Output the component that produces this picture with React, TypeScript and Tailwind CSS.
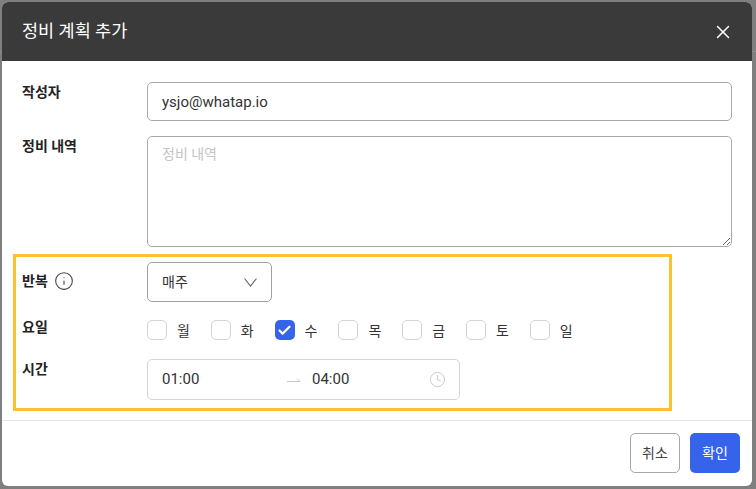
import { Check, Clock, Info, X } from "lucide-react";
import React from "react";

const FONT = "font-['Roboto','Noto_Sans_CJK_KR',sans-serif]";

const days = [
  { label: "월", checked: false },
  { label: "화", checked: false },
  { label: "수", checked: true },
  { label: "목", checked: false },
  { label: "금", checked: false },
  { label: "토", checked: false },
  { label: "일", checked: false },
];

const Label = ({ children }: { children: React.ReactNode }) => (
  <span className="block text-[14px] leading-[20px] font-bold text-[#222]">{children}</span>
);

const App = () => {
  return (
    <div className={`${FONT} relative w-[756px] h-[489px] overflow-hidden bg-[#7f7f7f] pt-[2px] pl-[2px]`}>
      {/* page behind the backdrop */}
      <div className="absolute left-0 right-0 top-[51px] h-px bg-[#8c8c8c]" />

      <div className="relative w-[750px] h-[484px] bg-white rounded-[6px] overflow-hidden flex flex-col">
        {/* Header */}
        <div className="h-[59px] shrink-0 bg-[#3a3a3a] flex items-center justify-between pl-[20px] pr-[18px]">
          <span className="text-[17.5px] text-white">정비 계획 추가</span>
          <X size={22} strokeWidth={1.6} className="text-white" />
        </div>

        {/* Form */}
        <div className="h-[360px] shrink-0 pl-[20px] pr-[20px] pt-[21px] border-b border-[#e4e4e4]">
          <div className="flex">
            <div className="w-[125px]">
              <Label>작성자</Label>
            </div>
            <input
              readOnly
              value="ysjo@whatap.io"
              className="w-[585px] h-[39px] px-[14px] text-[15px] text-[#333] border border-[#a8a8a8] rounded-[5px] outline-none"
            />
          </div>

          <div className="flex mt-[15px]">
            <div className="w-[125px]">
              <Label>정비 내역</Label>
            </div>
            <textarea
              placeholder="정비 내역"
              className="block w-[585px] h-[111px] px-[14px] py-[7px] text-[14px] leading-[20px] border border-[#a8a8a8] rounded-[5px] outline-none placeholder:text-[#c4c4c4]"
            />
          </div>

          <div className="flex mt-[15px]">
            <div className="w-[125px] flex items-center gap-[7px] h-[38px]">
              <Label>반복</Label>
              <Info size={20} strokeWidth={1.3} className="text-[#444] -ml-[1px]" />
            </div>
            <div className="w-[125px] h-[40px] pl-[14px] pr-[14px] flex items-center justify-between border border-[#a0a0a0] rounded-[5px] text-[14px] text-[#333]">
              <span>매주</span>
              <svg width="13" height="9" viewBox="0 0 13 9" fill="none" stroke="#666" strokeWidth="1.2">
                <path d="M.5 .5 6.5 8 12.5 .5" />
              </svg>
            </div>
          </div>

          <div className="flex h-[20px] mt-[18px]">
            <div className="w-[125px] -mt-[3px]">
              <Label>요일</Label>
            </div>
            <div className="flex">
              {days.map((day) => (
                <div key={day.label} className="w-[63.8px] h-[20px] flex items-center gap-[10px]">
                  {day.checked ? (
                    <span className="w-[20px] h-[20px] rounded-[5px] bg-[#3563e9] flex items-center justify-center">
                      <Check size={15} strokeWidth={3.5} className="text-white" />
                    </span>
                  ) : (
                    <span className="w-[20px] h-[20px] rounded-[5px] border border-[#d4d4d4] bg-white" />
                  )}
                  <span className="mt-[2px] text-[14px] leading-[20px] text-[#333]">{day.label}</span>
                </div>
              ))}
            </div>
          </div>

          <div className="flex mt-[19px]">
            <div className="w-[125px]">
              <Label>시간</Label>
            </div>
            <div className="w-[313px] h-[41px] pl-[14px] pr-[13px] flex items-center border border-[#d4d4d4] rounded-[5px] text-[15px] text-[#333]">
              <span className="w-[125px]">01:00</span>
              <svg width="14" height="6" viewBox="0 0 14 6" className="text-[#c8c8c8]" fill="none" stroke="currentColor">
                <path d="M0 4.5H13L10 1.5" />
              </svg>
              <span className="ml-[11px] flex-1">04:00</span>
              <Clock size={17} strokeWidth={1.1} className="text-[#bbb]" />
            </div>
          </div>

          {/* Yellow annotation */}
          <div className="absolute left-[11px] top-[252px] w-[659px] h-[157px] border-[3px] border-[#fdc02f]" />
        </div>

        {/* Footer */}
        <div className="flex-1 flex justify-end gap-[10px] pr-[12px] pt-[12px]">
          <button className="w-[50px] h-[40px] rounded-[5px] border border-[#a8a8a8] bg-white text-[14px] text-[#444]">
            취소
          </button>
          <button className="w-[50px] h-[40px] rounded-[5px] bg-[#3563e9] text-[14px] text-white">
            확인
          </button>
        </div>
      </div>
    </div>
  );
};

export default App;
